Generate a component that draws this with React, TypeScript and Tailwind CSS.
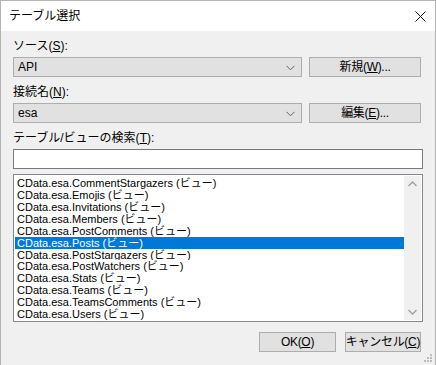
import type { ReactNode } from 'react'

const font = { fontFamily: '"Liberation Sans", "Noto Sans CJK JP", sans-serif' }

const items = [
  'CommentStargazers',
  'Emojis',
  'Invitations',
  'Members',
  'PostComments',
  'Posts',
  'PostStargazers',
  'PostWatchers',
  'Stats',
  'Teams',
  'TeamsComments',
  'Users',
]

function Label({ children }: { children: ReactNode }) {
  return <div className="h-[14px] leading-[14px] text-[12px] text-black whitespace-nowrap">{children}</div>
}

function Key({ k }: { k: string }) {
  return <span className="underline underline-offset-1">{k}</span>
}

function Combo({ value }: { value: string }) {
  return (
    <div className="w-[289px] h-[20px] bg-[#e1e1e1] border border-[#adadad] flex items-center justify-between pl-[4px] pr-[6px]">
      <span className="text-[12px] leading-none">{value}</span>
      <svg width="9" height="6" viewBox="0 0 9 6" className="mt-[2px]">
        <path d="M0.5 0.8 L4.5 4.8 L8.5 0.8" fill="none" stroke="#606060" strokeWidth="1" />
      </svg>
    </div>
  )
}

function Btn({ children, w }: { children: ReactNode; w: string }) {
  return (
    <div
      className={`${w} h-[20px] bg-[#e1e1e1] border border-[#adadad] flex items-center justify-center text-[12px] leading-none whitespace-nowrap tracking-[-0.3px]`}
    >
      {children}
    </div>
  )
}

export default function App() {
  return (
    <div
      className="w-[436px] h-[365px] bg-[#f0f0f0] flex flex-col border-l border-r border-t border-[#b4b4b4] relative overflow-hidden"
      style={font}
    >
      <div className="h-[30px] bg-white flex items-center justify-between pl-[8px] pr-[9px]">
        <span className="text-[12px]">テーブル選択</span>
        <svg width="11" height="11" viewBox="0 0 11 11">
          <path d="M0.5 0.5 L10.5 10.5 M10.5 0.5 L0.5 10.5" stroke="#111" strokeWidth="1" />
        </svg>
      </div>

      <div className="pl-[12px] pt-[8px] flex flex-col">
        <Label>
          ソース(<Key k="S" />):
        </Label>
        <div className="mt-[4px] flex gap-[7px]">
          <Combo value="API" />
          <Btn w="w-[112px]">
            新規(<Key k="W" />)...
          </Btn>
        </div>

        <div className="mt-[8px]">
          <Label>
            接続名(<Key k="N" />):
          </Label>
        </div>
        <div className="mt-[4px] flex gap-[7px]">
          <Combo value="esa" />
          <Btn w="w-[112px]">
            編集(<Key k="E" />)...
          </Btn>
        </div>

        <div className="mt-[8px]">
          <Label>
            テーブル/ビューの検索(<Key k="T" />):
          </Label>
        </div>
        <div className="mt-[4px] w-[410px] h-[20px] bg-white border border-[#7a7a7a]" />

        <div className="mt-[5px] w-[410px] h-[148px] bg-white border border-[#828790] flex p-[1px]">
          <div className="flex-1 flex flex-col pt-[1px]">
            {items.map((n) => (
              <div
                key={n}
                className={`h-[12px] leading-[12px] text-[11px] pl-[2px] whitespace-nowrap overflow-hidden ${
                  n === 'Posts' ? 'bg-[#0078d7] text-white' : 'text-black'
                }`}
              >
                CData.esa.{n} (ビュー)
              </div>
            ))}
          </div>
          <div className="w-[17px] bg-[#f0f0f0] flex flex-col justify-between items-center py-[5px]">
            <svg width="9" height="6" viewBox="0 0 9 6">
              <path d="M0.5 5 L4.5 1 L8.5 5" fill="none" stroke="#a3a3a3" strokeWidth="1.5" />
            </svg>
            <svg width="9" height="6" viewBox="0 0 9 6">
              <path d="M0.5 1 L4.5 5 L8.5 1" fill="none" stroke="#a3a3a3" strokeWidth="1.5" />
            </svg>
          </div>
        </div>

        <div className="mt-[10px] flex justify-end gap-[9px] pr-[14px]">
          <Btn w="w-[77px]">
            OK(<Key k="O" />)
          </Btn>
          <Btn w="w-[76px]">
            キャンセル(<Key k="C" />)
          </Btn>
        </div>
      </div>

      <svg width="8" height="8" viewBox="0 0 8 8" className="absolute right-[3px] bottom-[3px]">
        <rect x="6" y="0" width="2" height="2" fill="#bcbcbc" />
        <rect x="3" y="3" width="2" height="2" fill="#bcbcbc" />
        <rect x="6" y="3" width="2" height="2" fill="#bcbcbc" />
        <rect x="0" y="6" width="2" height="2" fill="#bcbcbc" />
        <rect x="3" y="6" width="2" height="2" fill="#bcbcbc" />
        <rect x="6" y="6" width="2" height="2" fill="#bcbcbc" />
      </svg>
    </div>
  )
}
